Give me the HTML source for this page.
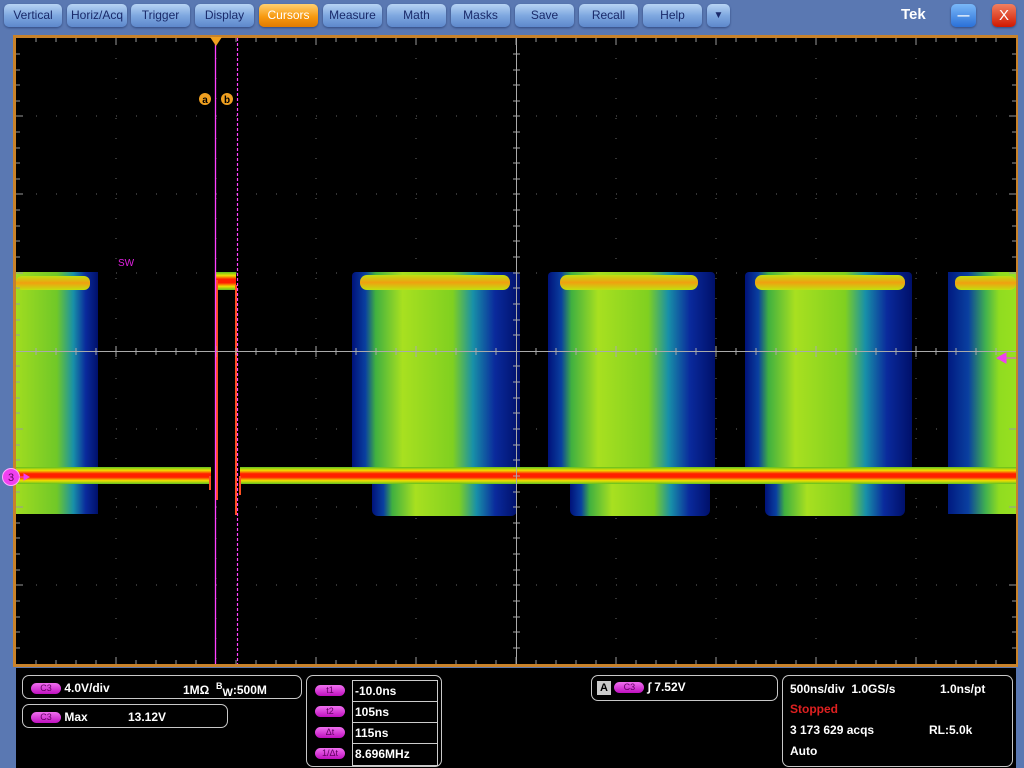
<!DOCTYPE html>
<html><head><meta charset="utf-8"><style>
body{margin:0;width:1024px;height:768px;overflow:hidden;background:#5a78b2;font-family:"Liberation Sans",sans-serif;position:relative}
.btn{position:absolute;top:4px;height:23px;border-radius:5px;background:linear-gradient(#b8d4f4,#7fa8e0 50%,#5d88cc);color:#1a2a6a;font-size:12px;text-align:center;line-height:23px;box-shadow:0 1px 2px #304a80}
.btn.on{background:linear-gradient(#ffd070,#f89a10 55%,#e07a00);color:#fff}
.pn{position:absolute;border:1px solid #c8c8c8;border-radius:7px;color:#fff;font-weight:bold;font-size:12px}
.pill{display:inline-block;width:30px;height:11px;border-radius:6px;background:linear-gradient(#f070f0,#c010c0);color:#600060;font-size:9px;font-weight:normal;text-align:center;line-height:11px;vertical-align:middle}
.t{position:absolute;white-space:nowrap}
</style></head><body>
<div class="btn" style="left:4px;width:58px">Vertical</div>
<div class="btn" style="left:67px;width:60px">Horiz/Acq</div>
<div class="btn" style="left:131px;width:59px">Trigger</div>
<div class="btn" style="left:195px;width:59px">Display</div>
<div class="btn on" style="left:259px;width:59px">Cursors</div>
<div class="btn" style="left:323px;width:59px">Measure</div>
<div class="btn" style="left:387px;width:59px">Math</div>
<div class="btn" style="left:451px;width:59px">Masks</div>
<div class="btn" style="left:515px;width:59px">Save</div>
<div class="btn" style="left:579px;width:59px">Recall</div>
<div class="btn" style="left:643px;width:59px">Help</div>
<div class="btn" style="left:707px;width:23px;font-size:10px">▼</div>
<div class="t" style="left:901px;top:6px;color:#fff;font-weight:bold;font-size:15px">Tek</div>
<div class="btn" style="left:951px;width:25px;background:linear-gradient(#7ab8f8,#2a70d8);color:#fff;font-weight:bold">—</div>
<div class="btn" style="left:992px;width:24px;background:linear-gradient(#f08060,#d01800);color:#fff;font-size:15px">X</div>
<div style="position:absolute;left:16px;top:668px;width:1000px;height:100px;background:#000"></div>
<svg style="position:absolute;left:0;top:0" width="1024" height="768">
<defs>
<linearGradient id="g" x1="0" x2="1" y1="0" y2="0">
<stop offset="0" stop-color="#00127a"/><stop offset=".08" stop-color="#0a40a0"/><stop offset=".14" stop-color="#40b040"/><stop offset=".3" stop-color="#a8e020"/><stop offset=".6" stop-color="#80d020"/><stop offset=".72" stop-color="#1890a8"/><stop offset=".85" stop-color="#0a2a9c"/><stop offset="1" stop-color="#00106a"/></linearGradient>
<linearGradient id="g1" x1="0" x2="1"><stop offset="0" stop-color="#a0dc20"/><stop offset=".5" stop-color="#70c828"/><stop offset=".7" stop-color="#1890a8"/><stop offset=".85" stop-color="#0a2a9c"/><stop offset="1" stop-color="#00106a"/></linearGradient>
<linearGradient id="g5" x1="0" x2="1"><stop offset="0" stop-color="#001a80"/><stop offset=".3" stop-color="#0a40a0"/><stop offset=".55" stop-color="#40b050"/><stop offset=".75" stop-color="#90dc20"/><stop offset="1" stop-color="#98e020"/></linearGradient>
<linearGradient id="tr" x1="0" x2="0" y1="0" y2="1"><stop offset="0" stop-color="#60c020"/><stop offset=".2" stop-color="#f0e000"/><stop offset=".4" stop-color="#ff2000"/><stop offset=".6" stop-color="#ff2000"/><stop offset=".8" stop-color="#f0e000"/><stop offset="1" stop-color="#60c020"/></linearGradient>
<linearGradient id="tb" x1="0" x2="0" y1="0" y2="1"><stop offset="0" stop-color="#c0e010"/><stop offset=".5" stop-color="#f0a010"/><stop offset="1" stop-color="#c0e010"/></linearGradient>
</defs>
<rect x="13" y="35" width="1005" height="632" fill="#c8822a"/>
<rect x="16" y="38" width="1000" height="626" fill="#000"/>
<g stroke="#666" stroke-width="1" stroke-dasharray="1 19">
<path d="M116 38V664M216 38V664M316 38V664M416 38V664M616 38V664M716 38V664M816 38V664M916 38V664"/>
<path d="M16 116H1016M16 194H1016M16 273H1016M16 429H1016M16 507H1016M16 585H1016"/>
</g>
<rect x="16" y="272" width="82" height="242" fill="url(#g1)"/>
<rect x="16" y="276" width="74" height="14" rx="6" fill="url(#tb)"/>
<rect x="352" y="272" width="168" height="205" rx="4" fill="url(#g)"/>
<rect x="372" y="470" width="145" height="46" rx="6" fill="url(#g)"/>
<rect x="360" y="275" width="150" height="15" rx="7" fill="url(#tb)"/>
<rect x="548" y="272" width="167" height="205" rx="4" fill="url(#g)"/>
<rect x="570" y="470" width="140" height="46" rx="6" fill="url(#g)"/>
<rect x="560" y="275" width="138" height="15" rx="7" fill="url(#tb)"/>
<rect x="745" y="272" width="167" height="205" rx="4" fill="url(#g)"/>
<rect x="765" y="470" width="140" height="46" rx="6" fill="url(#g)"/>
<rect x="755" y="275" width="150" height="15" rx="7" fill="url(#tb)"/>
<rect x="948" y="272" width="68" height="242" fill="url(#g5)"/>
<rect x="955" y="276" width="61" height="14" rx="6" fill="url(#tb)"/>
<rect x="16" y="467" width="195" height="17" fill="url(#tr)"/>
<rect x="240" y="467" width="776" height="17" fill="url(#tr)"/>
<rect x="216" y="272" width="20" height="18" fill="url(#tr)"/>
<path d="M210 476V490M217 280V500M236 285V515M240 476V495" stroke="#ff5020" stroke-width="2"/>
<path d="M16 351.5H1016M516.5 38V664" stroke="#aaa"/>
<path d="M36 348V355M56 348V355M76 348V355M96 348V355M136 348V355M156 348V355M176 348V355M196 348V355M236 348V355M256 348V355M276 348V355M296 348V355M336 348V355M356 348V355M376 348V355M396 348V355M436 348V355M456 348V355M476 348V355M496 348V355M536 348V355M556 348V355M576 348V355M596 348V355M636 348V355M656 348V355M676 348V355M696 348V355M736 348V355M756 348V355M776 348V355M796 348V355M836 348V355M856 348V355M876 348V355M896 348V355M936 348V355M956 348V355M976 348V355M996 348V355M116 346V357M216 346V357M316 346V357M416 346V357M616 346V357M716 346V357M816 346V357M916 346V357" stroke="#aaa"/>
<path d="M513 54H520M513 70H520M513 85H520M513 101H520M513 116H520M513 132H520M513 148H520M513 163H520M513 179H520M513 194H520M513 210H520M513 226H520M513 241H520M513 257H520M513 273H520M513 288H520M513 304H520M513 320H520M513 335H520M513 366H520M513 382H520M513 398H520M513 413H520M513 429H520M513 445H520M513 460H520M513 476H520M513 492H520M513 507H520M513 523H520M513 538H520M513 554H520M513 570H520M513 585H520M513 601H520M513 617H520M513 632H520M513 648H520" stroke="#aaa"/>
<path d="M36 38V42M56 38V42M76 38V42M96 38V42M116 38V45M136 38V42M156 38V42M176 38V42M196 38V42M236 38V42M256 38V42M276 38V42M296 38V42M316 38V45M336 38V42M356 38V42M376 38V42M396 38V42M416 38V45M436 38V42M456 38V42M476 38V42M496 38V42M516 38V45M536 38V42M556 38V42M576 38V42M596 38V42M616 38V45M636 38V42M656 38V42M676 38V42M696 38V42M716 38V45M736 38V42M756 38V42M776 38V42M796 38V42M816 38V45M836 38V42M856 38V42M876 38V42M896 38V42M916 38V45M936 38V42M956 38V42M976 38V42M996 38V42" stroke="#999"/>
<path d="M36 664V660M56 664V660M76 664V660M96 664V660M116 664V657M136 664V660M156 664V660M176 664V660M196 664V660M236 664V660M256 664V660M276 664V660M296 664V660M316 664V657M336 664V660M356 664V660M376 664V660M396 664V660M416 664V657M436 664V660M456 664V660M476 664V660M496 664V660M516 664V657M536 664V660M556 664V660M576 664V660M596 664V660M616 664V657M636 664V660M656 664V660M676 664V660M696 664V660M716 664V657M736 664V660M756 664V660M776 664V660M796 664V660M816 664V657M836 664V660M856 664V660M876 664V660M896 664V660M916 664V657M936 664V660M956 664V660M976 664V660M996 664V660" stroke="#999"/>
<path d="M16 54H20M16 70H20M16 85H20M16 101H20M16 116H23M16 132H20M16 148H20M16 163H20M16 179H20M16 194H23M16 210H20M16 226H20M16 241H20M16 257H20M16 273H23M16 288H20M16 304H20M16 320H20M16 335H20M16 366H20M16 382H20M16 398H20M16 413H20M16 429H23M16 445H20M16 460H20M16 492H20M16 507H23M16 523H20M16 538H20M16 554H20M16 570H20M16 585H23M16 601H20M16 617H20M16 632H20M16 648H20" stroke="#999"/>
<path d="M1016 54H1012M1016 70H1012M1016 85H1012M1016 101H1012M1016 116H1009M1016 132H1012M1016 148H1012M1016 163H1012M1016 179H1012M1016 194H1009M1016 210H1012M1016 226H1012M1016 241H1012M1016 257H1012M1016 273H1009M1016 429H1009M1016 507H1009M1016 585H1009M1016 601H1012M1016 617H1012M1016 632H1012M1016 648H1012" stroke="#999"/>
<path d="M215.5 38V664" stroke="#ff40ff" stroke-width="1.3"/>
<path d="M237.5 38V664" stroke="#ff40ff" stroke-width="1.2" stroke-dasharray="3 2"/>
<path d="M210 37H222L216 46Z" fill="#f0a020"/>
<circle cx="205" cy="99" r="6" fill="#f0a020"/><text x="205" y="103" font-size="10" font-weight="bold" text-anchor="middle" fill="#000" font-family="Liberation Sans">a</text>
<circle cx="227" cy="99" r="6" fill="#f0a020"/><text x="227" y="103" font-size="10" font-weight="bold" text-anchor="middle" fill="#000" font-family="Liberation Sans">b</text>
<text x="118" y="266" font-size="10" fill="#e020e0" font-family="Liberation Sans">SW</text>
<circle cx="11" cy="477" r="8.5" fill="#f040f0" stroke="#ffb0ff" stroke-width="1"/><text x="11" y="481" font-size="11" text-anchor="middle" fill="#600060" font-family="Liberation Sans">3</text>
<path d="M19 477H28M24 474L29 477L24 480Z" stroke="#f040f0" fill="#f040f0"/>
<path d="M997 358L1006 353V363Z M1005 358H1016" fill="#f040f0" stroke="#f040f0"/>
</svg>
<div class="pn" style="left:22px;top:675px;width:278px;height:22px">
<span class="t" style="left:8px;top:5px"><span class="pill">C3</span> 4.0V/div</span>
<span class="t" style="left:160px;top:5px">1MΩ &nbsp;<sup style="font-size:9px">B</sup><sub style="font-size:11px;vertical-align:-2px">W</sub>:500M</span></div>
<div class="pn" style="left:22px;top:704px;width:204px;height:22px">
<span class="t" style="left:8px;top:5px"><span class="pill">C3</span> Max</span><span class="t" style="left:105px;top:5px">13.12V</span></div>
<div class="pn" style="left:306px;top:675px;width:134px;height:90px">
<div class="t" style="left:8px;top:7px"><span class="pill">t1</span></div>
<div class="t" style="left:8px;top:28px"><span class="pill">t2</span></div>
<div class="t" style="left:8px;top:49px"><span class="pill">Δt</span></div>
<div class="t" style="left:8px;top:70px"><span class="pill">1/Δt</span></div>
<div style="position:absolute;left:45px;top:4px;width:84px;height:84px;border:1px solid #ccc">
<div style="height:20px;border-bottom:1px solid #ccc;padding-left:2px;line-height:20px">-10.0ns</div>
<div style="height:20px;border-bottom:1px solid #ccc;padding-left:2px;line-height:20px">105ns</div>
<div style="height:20px;border-bottom:1px solid #ccc;padding-left:2px;line-height:20px">115ns</div>
<div style="height:20px;padding-left:2px;line-height:20px">8.696MHz</div></div></div>
<div class="pn" style="left:591px;top:675px;width:185px;height:24px">
<span class="t" style="left:5px;top:4px"><span style="display:inline-block;width:14px;height:14px;background:#ccc;color:#000;text-align:center;line-height:14px;font-size:11px">A</span> <span class="pill">C3</span> ∫ 7.52V</span></div>
<div class="pn" style="left:782px;top:675px;width:229px;height:90px">
<span class="t" style="left:7px;top:6px">500ns/div &nbsp;1.0GS/s</span><span class="t" style="left:157px;top:6px">1.0ns/pt</span>
<span class="t" style="left:7px;top:26px;color:#e02020">Stopped</span>
<span class="t" style="left:7px;top:47px">3 173 629 acqs</span><span class="t" style="left:146px;top:47px">RL:5.0k</span>
<span class="t" style="left:7px;top:68px">Auto</span></div>
</body></html>
